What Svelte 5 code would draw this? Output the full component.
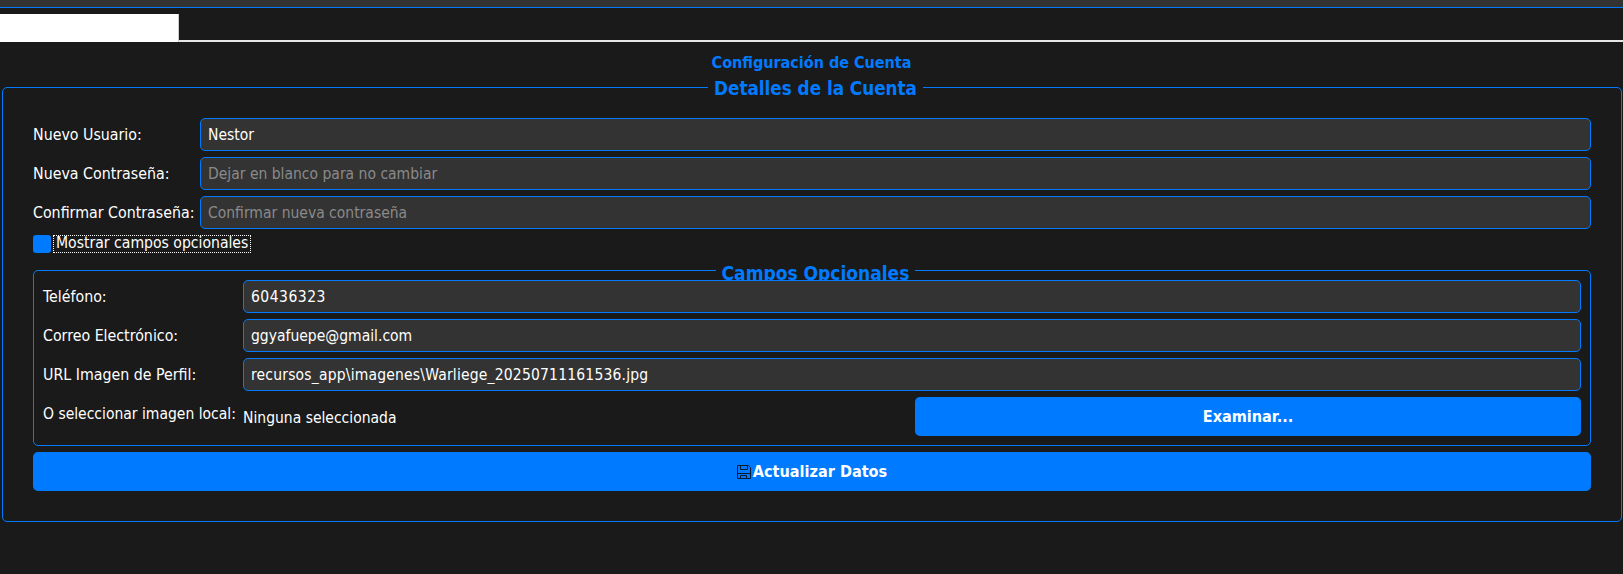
<script>
  const main = [
    { label: 'Nuevo Usuario:', value: 'Nestor', placeholder: '' },
    { label: 'Nueva Contraseña:', value: '', placeholder: 'Dejar en blanco para no cambiar' },
    { label: 'Confirmar Contraseña:', value: '', placeholder: 'Confirmar nueva contraseña' }
  ];
  const optional = [
    { label: 'Teléfono:', value: '60436323', cls: 'digits' },
    { label: 'Correo Electrónico:', value: 'ggyafuepe@gmail.com', cls: '' },
    { label: 'URL Imagen de Perfil:', value: 'recursos_app\\imagenes\\Warliege_20250711161536.jpg', cls: 'path' }
  ];
</script>

<div class="page">
  <div class="topbar"></div>
  <div class="tabs"><div class="tab"></div></div>
  <h1>Configuración de Cuenta</h1>
  <section class="panel">
    <h2 class="legend"><span>Detalles de la Cuenta</span></h2>
    {#each main as f}
      <div class="row">
        <span class="label main-label">{f.label}</span>
        <input class="field" value={f.value} placeholder={f.placeholder} />
      </div>
    {/each}
    <div class="check">
      <span class="box"></span>
      <span class="check-label">Mostrar campos opcionales</span>
    </div>
    <section class="group">
      <h3 class="legend"><span>Campos Opcionales</span></h3>
      {#each optional as f}
        <div class="row">
          <span class="label opt-label">{f.label}</span>
          <input class="field {f.cls}" value={f.value} />
        </div>
      {/each}
      <div class="row local">
        <span class="label opt-label raised">O seleccionar imagen local:</span>
        <span class="none">Ninguna seleccionada</span>
        <button class="btn browse">Examinar...</button>
      </div>
    </section>
    <button class="btn update">
      <svg width="14" height="14" viewBox="0 0 14 14" fill="none" stroke="#0a1a2e" stroke-width="1">
        <path d="M.5.5h11l2 2v11H.5z" />
        <path d="M3.5.5v4h7v-4" />
        <path d="M.5 8.5h13" />
        <path d="M3.5 13.5v-3h6v3" />
      </svg>
      <span>Actualizar Datos</span>
    </button>
  </section>
</div>

<style>
  :global(body) { margin: 0; background: #1a1a1a; }
  .page {
    height: 574px;
    overflow: hidden;
    background: #1a1a1a;
    color: #fff;
    font-family: "DejaVu Sans Condensed", "DejaVu Sans", sans-serif;
    font-size: 15.5px;
  }
  .topbar { height: 7px; background: #333; border-bottom: 1px solid #007bff; }
  .tabs { height: 26px; margin-top: 6px; border-bottom: 2px solid #e6e6e6; }
  .tab { width: 179px; height: 28px; background: #fff; border-right: 1px solid #ccc; box-sizing: border-box; }
  h1 {
    margin: 11px 0 0;
    height: 20px;
    line-height: 20px;
    text-align: center;
    font-size: 16px;
    font-weight: 700;
    color: #007bff;
  }
  .panel {
    position: relative;
    margin: 14px 1px 0 2px;
    height: 435px;
    box-sizing: border-box;
    padding: 30px 30px 0;
    border: 1px solid #007bff;
    border-radius: 5px;
  }
  .legend {
    position: absolute;
    left: 7px;
    right: 0;
    margin: 0;
    display: flex;
    justify-content: center;
    color: #007bff;
    font-weight: 700;
    font-size: 18.7px;
    line-height: 22px;
  }
  .legend span { background: #1a1a1a; padding: 0 6px; }
  h2.legend { top: -10px; }
  h3.legend { top: -9px; font-size: 19px; }
  .row { position: relative; z-index: 1; display: flex; align-items: center; gap: 6px; height: 33px; margin-bottom: 6px; }
  .label { flex: none; white-space: nowrap; font-size: 15.8px; }
  .main-label { width: 161px; }
  .opt-label { width: 194px; }
  .field {
    flex: 1;
    min-width: 0;
    height: 33px;
    box-sizing: border-box;
    padding: 1px 7px 0;
    background: #333;
    border: 1px solid #007bff;
    border-radius: 5px;
    color: #fff;
    font: inherit;
    outline: none;
  }
  .digits { letter-spacing: 0.5px; }
  .path { letter-spacing: 0.19px; }
  .field::placeholder { color: #8a8a8a; opacity: 1; }
  .check { display: flex; align-items: center; gap: 2px; height: 18px; }
  .box { width: 18px; height: 18px; background: #007bff; border-radius: 3px; }
  .check-label { height: 18px; line-height: 17px; padding: 0 3px; box-sizing: border-box; outline: 1px dotted #fff; outline-offset: -1px; white-space: nowrap; font-size: 15.6px; }
  .group {
    position: relative;
    margin-top: 17px;
    height: 176px;
    box-sizing: border-box;
    padding: 9px 9px 0;
    border: 1px solid #007bff;
    border-radius: 5px;
  }
  .local { height: 39px; margin-bottom: 0; }
  .raised { position: relative; top: -3px; font-size: 15.5px; }
  .none { flex: 1; min-width: 0; position: relative; top: 1px; }
  .btn {
    height: 39px;
    border: 0;
    border-radius: 5px;
    background: #007bff;
    color: #fff;
    font: inherit;
    font-size: 16.1px;
    font-weight: 700;
  }
  .browse { flex: none; width: 666px; }
  .update {
    display: flex;
    align-items: center;
    justify-content: center;
    gap: 2px;
    width: 100%;
    margin-top: 6px;
  }
</style>
